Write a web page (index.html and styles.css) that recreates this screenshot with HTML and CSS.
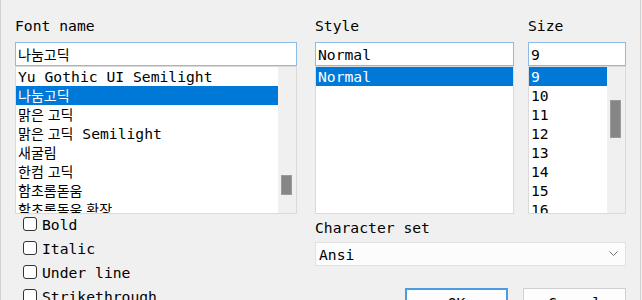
FILE: index.html
```html
<!DOCTYPE html>
<html lang="ko">
<head>
    <meta charset="UTF-8">
    <meta name="viewport" content="width=device-width, initial-scale=1.0">
    <title>Font</title>
    <link rel="stylesheet" href="styles.css">
</head>
<body>
    <div class="dialog">
        <div class="top">
            <div class="col col-font">
                <div class="caption">Font name</div>
                <input class="field ko" type="text" value="나눔고딕">
                <div class="listbox">
                    <ul class="items">
                        <li>Yu Gothic UI Semilight</li>
                        <li class="selected"><span class="ko">나눔고딕</span></li>
                        <li><span class="ko">맑은 고딕</span></li>
                        <li><span class="ko">맑은 고딕</span> Semilight</li>
                        <li><span class="ko">새굴림</span></li>
                        <li><span class="ko">한컴 고딕</span></li>
                        <li><span class="ko">함초롬돋움</span></li>
                        <li><span class="ko">함초롬돋움 확장</span></li>
                    </ul>
                    <div class="track"><div class="thumb thumb-font"></div></div>
                </div>
            </div>
            <div class="col col-style">
                <div class="caption">Style</div>
                <input class="field" type="text" value="Normal">
                <div class="listbox">
                    <ul class="items">
                        <li class="selected">Normal</li>
                    </ul>
                </div>
            </div>
            <div class="col col-size">
                <div class="caption">Size</div>
                <input class="field" type="text" value="9">
                <div class="listbox">
                    <ul class="items">
                        <li class="selected">9</li>
                        <li>10</li>
                        <li>11</li>
                        <li>12</li>
                        <li>13</li>
                        <li>14</li>
                        <li>15</li>
                        <li>16</li>
                    </ul>
                    <div class="track"><div class="thumb thumb-size"></div></div>
                </div>
            </div>
        </div>

        <div class="bottom">
            <div class="options">
                <label class="check"><span class="box"></span>Bold</label>
                <label class="check"><span class="box"></span>Italic</label>
                <label class="check"><span class="box"></span>Under line</label>
                <label class="check"><span class="box"></span>Strikethrough</label>
            </div>
            <div class="charset">
                <div class="caption">Character set</div>
                <div class="combo">
                    <span>Ansi</span>
                    <svg class="chevron" width="9" height="6" viewBox="0 0 9 6">
                        <polyline points="0.5,0.5 4.5,4.5 8.5,0.5" fill="none" stroke="#6d6d6d" stroke-width="1"/>
                    </svg>
                </div>
                <div class="buttons">
                    <button class="btn btn-default">OK</button>
                    <button class="btn">Cancel</button>
                </div>
            </div>
        </div>
    </div>
</body>
</html>
```

FILE: styles.css
```css
body {
    margin: 0;
    background: #f0f0f0;
    font-family: "DejaVu Sans Mono", "Noto Sans CJK KR", monospace;
    font-size: 14.7px;
    color: #000;
    overflow: hidden;
}
.dialog {
    box-sizing: border-box;
    width: 641px;
    height: 300px;
    padding: 17px 14px 0 14px;
    border-left: 1px solid #d2d2d2;
    border-right: 1px solid #d2d2d2;
}
.ko {
    font-family: "Noto Sans CJK KR", sans-serif;
    font-size: 14px;
}
.top {
    display: flex;
}
.col {
    display: flex;
    flex-direction: column;
}
.col-font {
    width: 282px;
    margin-right: 18px;
}
.col-style {
    width: 199px;
    margin-right: 14px;
}
.col-size {
    width: 98px;
}
.caption {
    height: 18px;
    line-height: 18px;
    margin-bottom: 7px;
}
.field {
    box-sizing: border-box;
    height: 24px;
    margin: 0;
    padding: 0 2px;
    border: 1px solid #8cbbe6;
    background: #fff;
    font-family: inherit;
    font-size: inherit;
    color: #000;
    outline: none;
}
.field.ko {
    font-family: "Noto Sans CJK KR", sans-serif;
    font-size: 14px;
}
.listbox {
    box-sizing: border-box;
    height: 148px;
    display: flex;
    background: #fff;
    border: 1px solid #dadada;
    overflow: hidden;
}
.items {
    flex: 1;
    list-style: none;
    margin: 0;
    padding: 0;
}
.items li {
    height: 19px;
    line-height: 19px;
    padding-left: 2px;
    white-space: nowrap;
}
.items li.selected {
    background: #0078d7;
    color: #fff;
}
.track {
    width: 18px;
    background: #f0f0f0;
}
.thumb {
    width: 11px;
    margin-left: 3px;
    background: #868686;
    border: 1px solid #9a9a9a;
    box-sizing: border-box;
}
.thumb-font {
    margin-top: 108px;
    height: 20px;
}
.thumb-size {
    margin-top: 33px;
    height: 38px;
}
.bottom {
    display: flex;
}
.options {
    box-sizing: border-box;
    width: 300px;
    padding-left: 8px;
    display: flex;
    flex-direction: column;
    gap: 4px;
}
.check {
    display: flex;
    align-items: center;
    height: 20px;
    gap: 5px;
}
.box {
    box-sizing: border-box;
    width: 14px;
    height: 14px;
    border: 1px solid #333;
    border-radius: 3px;
    background: #fff;
}
.charset {
    width: 311px;
    padding-top: 5px;
}
.charset .caption {
    margin-bottom: 5px;
}
.combo {
    box-sizing: border-box;
    height: 24px;
    display: flex;
    align-items: center;
    justify-content: space-between;
    padding: 0 7px 0 3px;
    background: #fcfcfc;
    border: 1px solid #e0e0e0;
}
.buttons {
    display: flex;
    justify-content: flex-end;
    gap: 15px;
    margin-top: 22px;
}
.btn {
    box-sizing: border-box;
    width: 103px;
    height: 28px;
    font-family: inherit;
    font-size: inherit;
    color: #000;
    background: #fdfdfd;
    border: 1px solid #d0d0d0;
    padding: 0;
}
.btn-default {
    border: 2px solid #4c9ce3;
}
```
